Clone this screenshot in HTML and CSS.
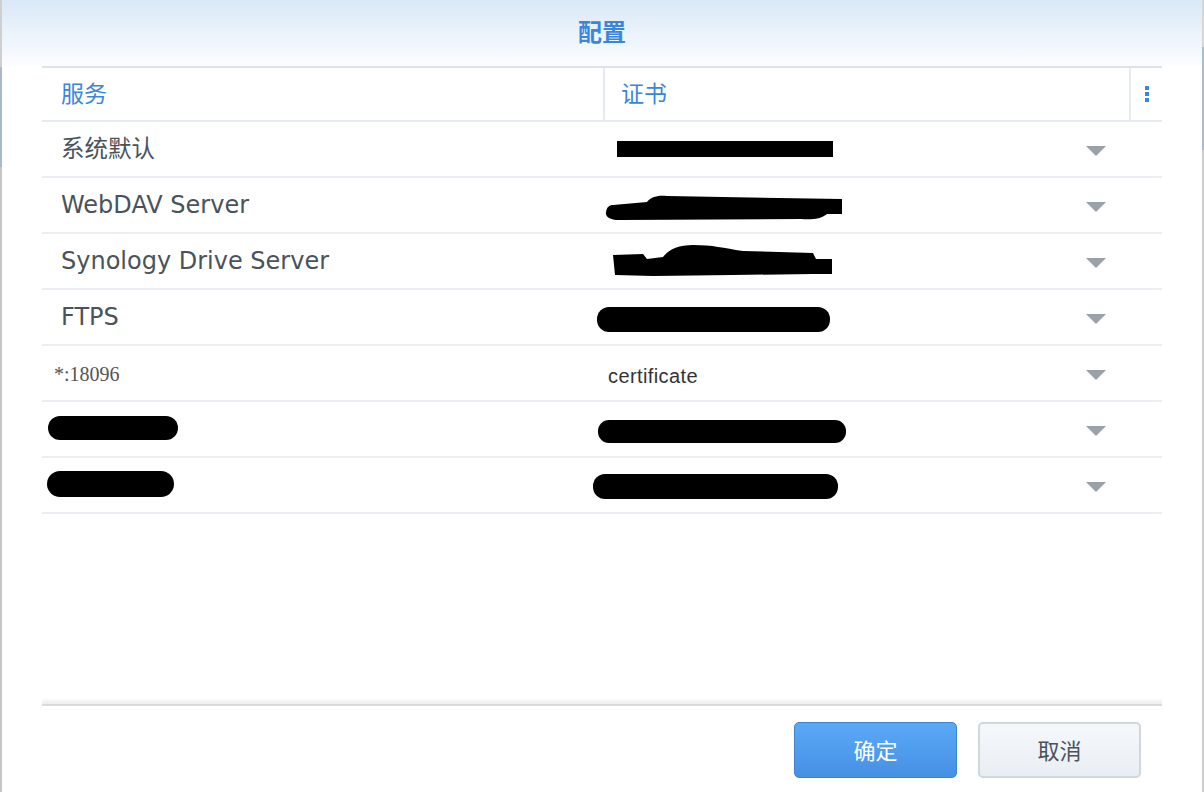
FILE: index.html
```html
<!DOCTYPE html>
<html lang="zh">
<head>
<meta charset="utf-8">
<title>配置</title>
<link rel="stylesheet" href="styles.css">
</head>
<body>
<div class="dialog">
  <div class="title">配置</div>
  <div class="table">
    <div class="thead">
      <div class="th th-service">服务</div>
      <div class="th th-cert">证书</div>
      <div class="th th-menu"><span class="kebab"><i></i><i></i><i></i></span></div>
    </div>
    <div class="row">
      <div class="cell svc cjk">系统默认</div>
      <div class="cell cert">
        <svg class="redact rc1" width="216" height="16" viewBox="0 0 216 16"><rect width="216" height="16"/></svg>
        <span class="caret"></span>
      </div>
    </div>
    <div class="row">
      <div class="cell svc">WebDAV Server</div>
      <div class="cell cert">
        <svg class="redact rc2" width="237" height="25" viewBox="0 0 237 25"><path d="M8 10 L42 7 C46 2 52 0 62 1 L237 4 L237 19 L222 19 C216 24 206 25 196 24 L14 25 C4 25 0 21 1 17 C2 12 4 10 8 10 Z"/></svg>
        <span class="caret"></span>
      </div>
    </div>
    <div class="row">
      <div class="cell svc">Synology Drive Server</div>
      <div class="cell cert">
        <svg class="redact rc3" width="219" height="31" viewBox="0 0 219 31"><path d="M0 10 L30 9 L34 14 L50 12 C56 4 66 0 80 0 C100 0 110 3 130 6 L200 8 L203 14 L219 14 L219 29 L200 29 L120 30 L40 31 L2 30 Z"/></svg>
        <span class="caret"></span>
      </div>
    </div>
    <div class="row">
      <div class="cell svc">FTPS</div>
      <div class="cell cert">
        <svg class="redact rc4" width="233" height="25" viewBox="0 0 233 25"><rect width="233" height="25" rx="12"/></svg>
        <span class="caret"></span>
      </div>
    </div>
    <div class="row">
      <div class="cell svc port">*:18096</div>
      <div class="cell cert">
        <span class="cert-name">certificate</span>
        <span class="caret"></span>
      </div>
    </div>
    <div class="row">
      <div class="cell svc">
        <svg class="redact rs6" width="130" height="24" viewBox="0 0 130 24"><rect width="130" height="24" rx="12"/></svg>
      </div>
      <div class="cell cert">
        <svg class="redact rc6" width="248" height="23" viewBox="0 0 248 23"><rect width="248" height="23" rx="11"/></svg>
        <span class="caret"></span>
      </div>
    </div>
    <div class="row">
      <div class="cell svc">
        <svg class="redact rs7" width="127" height="26" viewBox="0 0 127 26"><rect width="127" height="26" rx="13"/></svg>
      </div>
      <div class="cell cert">
        <svg class="redact rc7" width="245" height="25" viewBox="0 0 245 25"><rect width="245" height="25" rx="12"/></svg>
        <span class="caret"></span>
      </div>
    </div>
  </div>
  <div class="spacer"></div>
  <div class="footer">
    <button class="btn btn-primary">确定</button>
    <button class="btn btn-default">取消</button>
  </div>
</div>
</body>
</html>
```

FILE: styles.css
```css
html, body {
  margin: 0;
  padding: 0;
}

body {
  height: 792px;
  overflow: hidden;
  font-family: "DejaVu Sans", "Noto Sans CJK SC", sans-serif;
  background:
    linear-gradient(to bottom, #cfcfcf 0 67px, #a9b8ca 67px 167px, #c6c6c6 167px) left top / 2px 100% no-repeat,
    linear-gradient(to bottom, #d6d6d6 0 47px, #aebbc9 47px 150px, #cdcdcd 150px) right top / 2px 100% no-repeat,
    #ffffff;
}

.dialog {
  margin: 0 2px;
  height: 792px;
  background: #ffffff;
  display: flex;
  flex-direction: column;
}

.title {
  height: 66px;
  flex: none;
  display: flex;
  align-items: center;
  justify-content: center;
  background: linear-gradient(to bottom, #d9e8f7 0%, #fcfdff 100%);
  font-family: "Noto Sans CJK SC", sans-serif;
  font-weight: 700;
  font-size: 24px;
  color: #3a86dc;
  padding-bottom: 6px;
  box-sizing: border-box;
}

.table {
  margin: 0 40px;
  flex: none;
}

.thead {
  display: grid;
  grid-template-columns: 561px 1fr 33px;
  border-top: 2px solid #dbe3ed;
  border-bottom: 2px solid #e6ebf1;
  box-sizing: border-box;
  height: 56px;
}

.th {
  display: flex;
  align-items: center;
  font-family: "Noto Sans CJK SC", sans-serif;
  font-size: 23px;
  color: #3a86dc;
}

.th-service {
  padding-left: 19px;
  padding-bottom: 4px;
}

.th-cert {
  border-left: 2px solid #e6ebf1;
  padding-left: 16px;
  padding-bottom: 4px;
}

.th-menu {
  border-left: 2px solid #e6ebf1;
  justify-content: center;
}

.kebab {
  display: flex;
  flex-direction: column;
  gap: 2px;
}

.kebab i {
  display: block;
  width: 4px;
  height: 4px;
  background: #3a86dc;
}

.row {
  display: grid;
  grid-template-columns: 561px 1fr;
  height: 56px;
  box-sizing: border-box;
  border-bottom: 2px solid #ebeff3;
}

.cell {
  display: flex;
  align-items: center;
  min-width: 0;
}

.svc {
  padding-left: 19px;
  font-size: 24px;
  color: #4a535c;
}

.svc.cjk {
  font-size: 23.5px;
  padding-bottom: 4px;
}

.svc.port {
  font-family: "Liberation Serif", serif;
  font-size: 20px;
  color: #555555;
  padding-left: 12px;
  padding-top: 2px;
}

.cert {
  padding-left: 5px;
  padding-right: 56px;
}

.cert-name {
  font-family: "Liberation Sans", sans-serif;
  font-size: 20px;
  letter-spacing: 0.4px;
  color: #333333;
  padding-top: 6px;
}

.redact {
  display: block;
  fill: #000000;
  flex: none;
}

.rc1 { margin-left: 9px; margin-top: 0; }
.rc2 { margin-left: -3px; margin-top: 4px; }
.rc3 { margin-left: 5px; margin-top: -2px; }
.rc4 { margin-left: -11px; margin-top: 4px; }
.rc6 { margin-left: -10px; margin-top: 4px; }
.rc7 { margin-left: -15px; margin-top: 2px; }
.rs6 { margin-left: -13px; margin-top: -3px; }
.rs7 { margin-left: -14px; margin-top: -3px; }

.caret {
  margin-left: auto;
  width: 0;
  height: 0;
  border-left: 10px solid transparent;
  border-right: 10px solid transparent;
  border-top: 10px solid #9aa1a9;
  margin-top: 4px;
  flex: none;
}

.spacer {
  flex: 1;
}

.footer {
  margin: 0 40px;
  flex: none;
  position: relative;
  border-top: 2px solid #dadada;
  padding: 16px 21px 14px 0;
  display: flex;
  justify-content: flex-end;
  gap: 21px;
}

.footer::before {
  content: "";
  position: absolute;
  left: 0;
  right: 0;
  top: -8px;
  height: 6px;
  background: linear-gradient(to bottom, rgba(230, 230, 230, 0), #ececec);
}

.btn {
  width: 163px;
  height: 56px;
  border-radius: 5px;
  font-family: "Noto Sans CJK SC", sans-serif;
  font-size: 22px;
  cursor: pointer;
  padding: 0 0 2px 0;
}

.btn-primary {
  background: linear-gradient(to bottom, #5aa9f6, #4690e4);
  border: 1px solid #3f83d5;
  color: #ffffff;
}

.btn-default {
  background: linear-gradient(to bottom, #f5f8fb, #e9eef4);
  border: 2px solid #cfd7e0;
  color: #4a535c;
}
```
